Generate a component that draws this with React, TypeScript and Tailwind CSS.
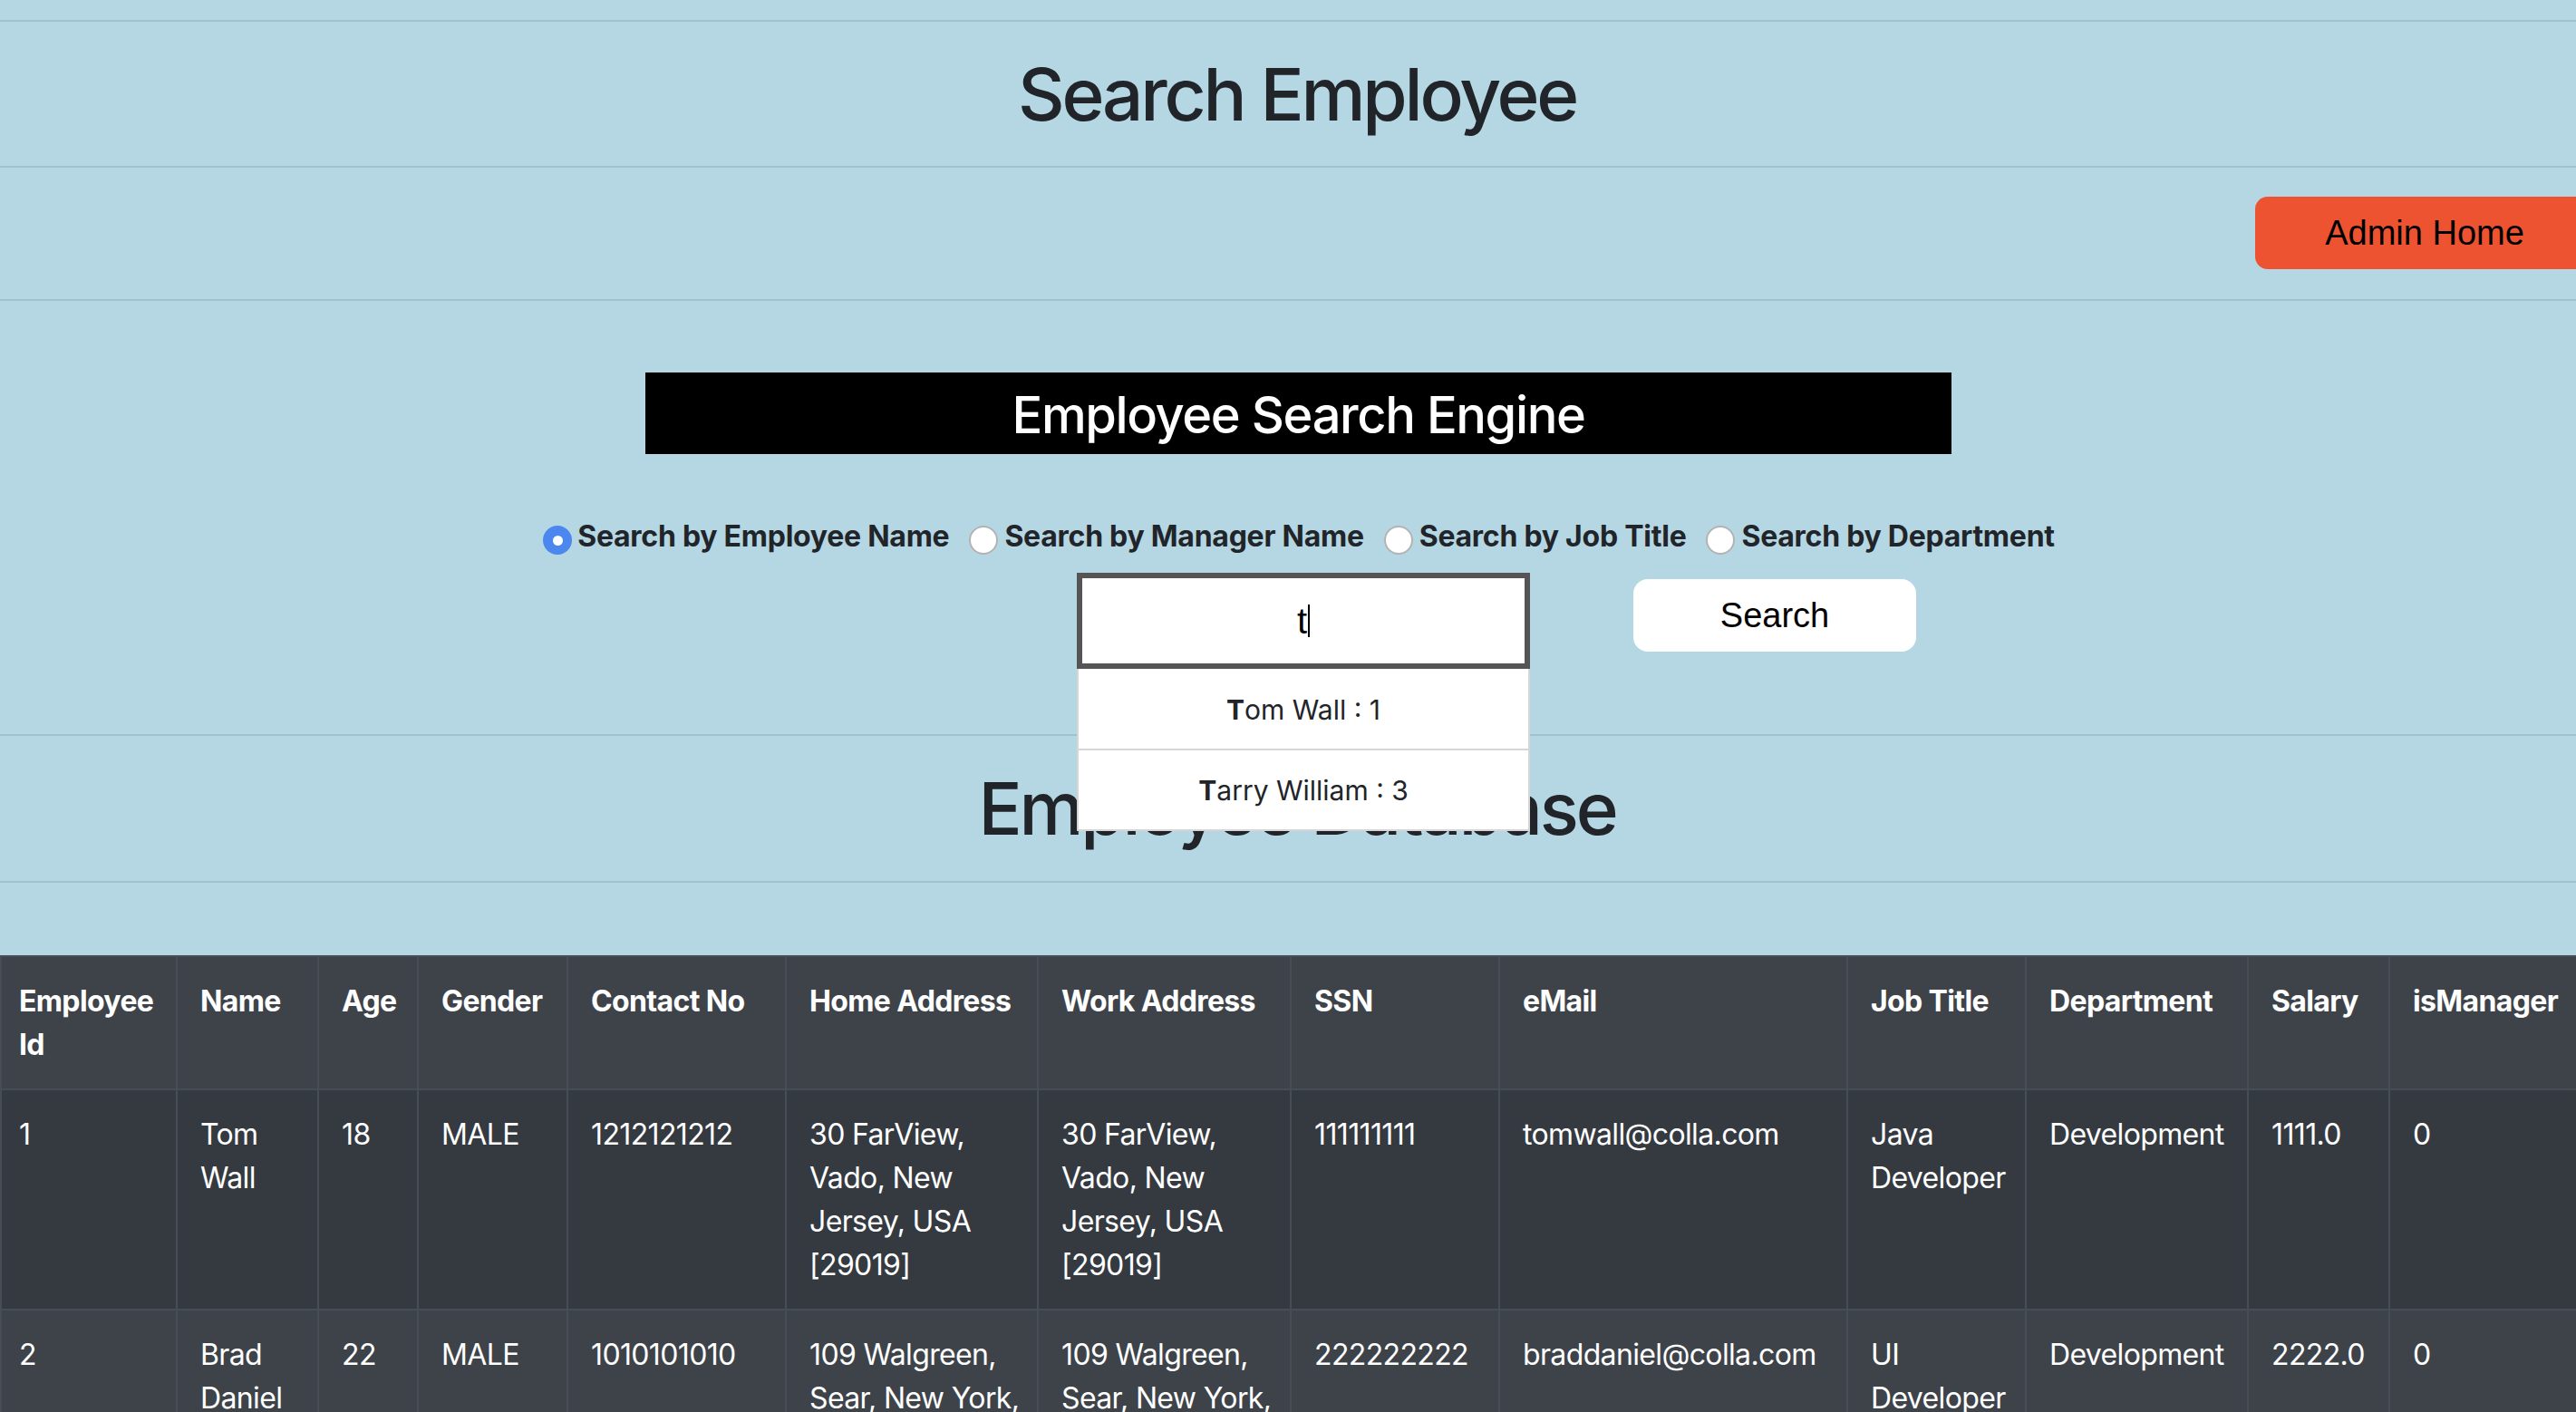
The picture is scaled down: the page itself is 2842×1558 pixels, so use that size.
import React from "react";

const SANS = "font-['Inter','Noto_Sans',sans-serif]";
const HELV = "font-['Liberation_Sans','Arial',sans-serif]";

const columns = [
  { title: ["Employee", "Id"], w: "w-[194px]" },
  { title: ["Name"], w: "w-[156px]" },
  { title: ["Age"], w: "w-[110px]" },
  { title: ["Gender"], w: "w-[165px]" },
  { title: ["Contact No"], w: "w-[241px]" },
  { title: ["Home Address"], w: "w-[278px]" },
  { title: ["Work Address"], w: "w-[279px]" },
  { title: ["SSN"], w: "w-[230px]" },
  { title: ["eMail"], w: "w-[384px]" },
  { title: ["Job Title"], w: "w-[197px]" },
  { title: ["Department"], w: "w-[245px]" },
  { title: ["Salary"], w: "w-[156px]" },
  { title: ["isManager"], w: "w-[227px]" },
];

const rows: string[][][] = [
  [
    ["1"],
    ["Tom", "Wall"],
    ["18"],
    ["MALE"],
    ["1212121212"],
    ["30 FarView,", "Vado, New", "Jersey, USA", "[29019]"],
    ["30 FarView,", "Vado, New", "Jersey, USA", "[29019]"],
    ["111111111"],
    ["tomwall@colla.com"],
    ["Java", "Developer"],
    ["Development"],
    ["1111.0"],
    ["0"],
  ],
  [
    ["2"],
    ["Brad", "Daniel"],
    ["22"],
    ["MALE"],
    ["1010101010"],
    ["109 Walgreen,", "Sear, New York,", "USA [10001]"],
    ["109 Walgreen,", "Sear, New York,", "USA [10001]"],
    ["222222222"],
    ["braddaniel@colla.com"],
    ["UI", "Developer"],
    ["Development"],
    ["2222.0"],
    ["0"],
  ],
  [
    ["3"],
    ["Tarry", "William"],
    ["30"],
    ["MALE"],
    ["1313131313"],
    ["12 Park Lane,", "Vado, New", "Jersey, USA", "[29019]"],
    ["12 Park Lane,", "Vado, New", "Jersey, USA", "[29019]"],
    ["333333333"],
    ["tarrywilliam@colla.com"],
    ["Project", "Manager"],
    ["Development"],
    ["3333.0"],
    ["1"],
  ],
];

const radios = [
  "Search by Employee Name",
  "Search by Manager Name",
  "Search by Job Title",
  "Search by Department",
];

function Lines({ lines }: { lines: string[] }) {
  return (
    <>
      {lines.map((l, i) => (
        <div key={i} className="whitespace-nowrap">
          {l}
        </div>
      ))}
    </>
  );
}

function Radio({ checked }: { checked: boolean }) {
  if (checked) {
    return (
      <span className="mt-[12px] mr-[6px] flex h-[32px] w-[32px] shrink-0 items-center justify-center rounded-full bg-[#4b87ef]">
        <span className="h-[11px] w-[11px] rounded-full bg-white" />
      </span>
    );
  }
  return (
    <span className="mt-[12px] mr-[7px] h-[32px] w-[32px] shrink-0 rounded-full border-2 border-[#b3b3b3] bg-white" />
  );
}

function Hr({ className = "" }: { className?: string }) {
  return <div className={`border-t-2 border-black/10 ${className}`} />;
}

export default function App() {
  return (
    <div className={`min-h-screen w-full overflow-hidden bg-[#b5d7e3] ${SANS}`}>
      <div className="w-[2862px] pt-[22px] text-[#212529]">
        <Hr />
        <h1 className="mt-[32px] text-center text-[80px] font-medium leading-[96px] tracking-[-0.04em]">
          Search Employee
        </h1>
        <Hr className="mt-[31px]" />

        <div className="mt-[32px] flex justify-end">
          <button
            type="button"
            className={`h-[80px] w-[374px] rounded-[14px] bg-[#ed5331] text-center text-[38px] text-black ${HELV}`}
          >
            Admin Home
          </button>
        </div>
        <Hr className="mt-[33px]" />

        <div className="mt-[79px] flex justify-center pl-[3px]">
          <div className="flex h-[90px] w-[1441px] items-center justify-center bg-black pt-[4px] text-[56px] font-medium tracking-[-0.025em] text-white">
            Employee Search Engine
          </div>
        </div>

        <div className="mt-[67px] flex justify-center pl-[4px]">
          {radios.map((r, i) => (
            <label
              key={r}
              className={`flex items-start text-[32px] font-bold leading-[48px] tracking-[-0.008em] ${i > 0 ? "ml-[22px]" : ""}`}
            >
              <Radio checked={i === 0} />
              <span>{r}</span>
            </label>
          ))}
        </div>

        <div className="mt-[16px] grid grid-cols-[1fr_500px_1fr] pl-[14px]">
          <div />
          <div className="relative z-10">
            <div className={`flex h-[106px] items-center justify-center border-[6px] border-[#555555] bg-white text-[40px] text-black ${HELV}`}>
              <span>t</span>
              <span className="ml-[1px] h-[36px] w-[2px] bg-black" />
            </div>
            <div className="absolute left-0 top-full w-full border-x-2 border-b-2 border-[#d6d6d6] bg-white text-[30px] text-[#212529]">
              <div className="flex h-[90px] items-center justify-center border-b-2 border-[#d6d6d6] pt-[2px]">
                <span className="font-bold">T</span>om Wall : 1
              </div>
              <div className="flex h-[87px] items-center justify-center pt-[2px]">
                <span className="font-bold">T</span>arry William : 3
              </div>
            </div>
          </div>
          <div className="flex items-start">
            <button
              type="button"
              className={`ml-[114px] mt-[7px] h-[80px] w-[312px] rounded-[16px] bg-white text-[38px] text-black ${HELV}`}
            >
              Search
            </button>
          </div>
        </div>

        <Hr className="mt-[72px]" />
        <h1 className="mt-[32px] text-center text-[80px] font-medium leading-[96px] tracking-[-0.04em]">
          Employee Database
        </h1>
        <Hr className="mt-[32px]" />

        <table className="mt-[80px] w-[2862px] table-fixed border-collapse text-[32px] leading-[48px] tracking-[-0.02em] text-white">
          <colgroup>
            {columns.map((c, i) => (
              <col key={i} className={c.w} />
            ))}
          </colgroup>
          <tbody>
            <tr className="bg-[#3e4349]">
              {columns.map((c, i) => (
                <th
                  key={i}
                  className={`border-2 border-[#454d55] pt-[25px] pb-[24px] pr-[24px] text-left align-top font-bold ${i === 0 ? "pl-[19px]" : "pl-[25px]"}`}
                >
                  <Lines lines={c.title} />
                </th>
              ))}
            </tr>
            {rows.map((row, ri) => (
              <tr key={ri} className={ri % 2 === 0 ? "bg-[#343a40]" : "bg-[#3e4349]"}>
                {row.map((cell, ci) => (
                  <td
                    key={ci}
                    className={`border-2 border-[#454d55] pt-[25px] pb-[24px] pr-[24px] align-top ${ci === 0 ? "pl-[19px]" : "pl-[25px]"}`}
                  >
                    <Lines lines={cell} />
                  </td>
                ))}
              </tr>
            ))}
          </tbody>
        </table>
      </div>
    </div>
  );
}
